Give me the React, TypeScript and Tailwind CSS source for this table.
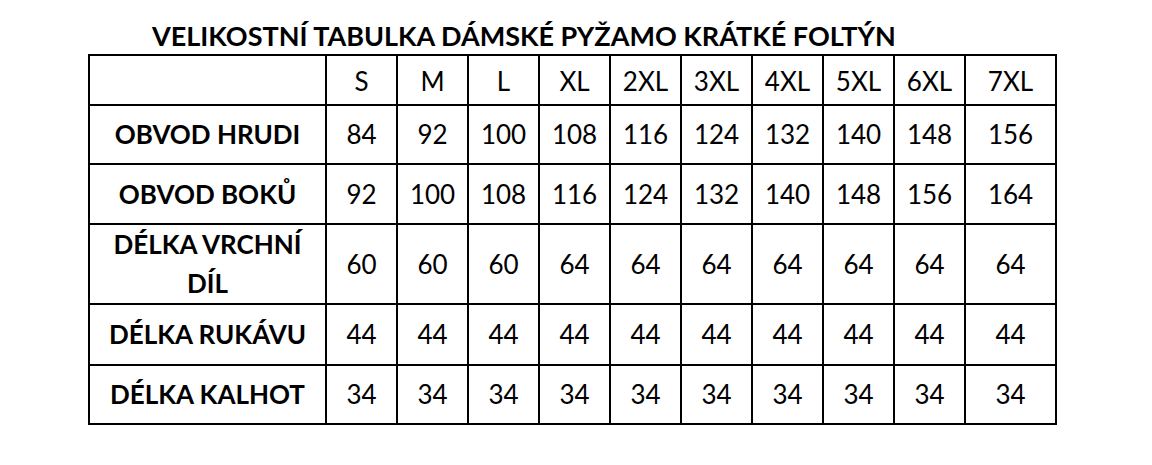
const sizes = ["S", "M", "L", "XL", "2XL", "3XL", "4XL", "5XL", "6XL", "7XL"];

const rows: { label: React.ReactNode; values: number[]; h: string }[] = [
  { label: "OBVOD HRUDI", values: [84, 92, 100, 108, 116, 124, 132, 140, 148, 156], h: "h-[59px]" },
  { label: "OBVOD BOKŮ", values: [92, 100, 108, 116, 124, 132, 140, 148, 156, 164], h: "h-[60px]" },
  {
    label: (
      <>
        DÉLKA VRCHNÍ
        <br />
        DÍL
      </>
    ),
    values: [60, 60, 60, 64, 64, 64, 64, 64, 64, 64],
    h: "h-[80px]",
  },
  { label: "DÉLKA RUKÁVU", values: [44, 44, 44, 44, 44, 44, 44, 44, 44, 44], h: "h-[61px]" },
  { label: "DÉLKA KALHOT", values: [34, 34, 34, 34, 34, 34, 34, 34, 34, 34], h: "h-[59px]" },
];

const cell = "border-2 border-black text-center align-middle p-0";

export default function App() {
  return (
    <div className="w-[1152px] h-[465px] bg-white text-black font-['Lato',sans-serif]">
      <h1 className="m-0 pl-[152px] pt-[20px] h-[54px] text-[27px] leading-[32px] font-bold whitespace-nowrap">
        VELIKOSTNÍ TABULKA DÁMSKÉ PYŽAMO KRÁTKÉ FOLTÝN
      </h1>
      <table className="ml-[88px] border-collapse table-fixed w-[967px]">
        <colgroup>
          <col className="w-[237px]" />
          {sizes.slice(0, 9).map(s => (
            <col key={s} className="w-[71px]" />
          ))}
          <col className="w-[91px]" />
        </colgroup>
        <thead>
          <tr className="h-[50px]">
            <th className={cell}></th>
            {sizes.map(s => (
              <th key={s} className={`${cell} text-[26px] font-normal pt-[3px]`}>
                {s}
              </th>
            ))}
          </tr>
        </thead>
        <tbody>
          {rows.map((r, i) => (
            <tr key={i} className={r.h}>
              <td className={`${cell} text-[26px] font-bold leading-[39px]`}>{r.label}</td>
              {r.values.map((v, j) => (
                <td key={j} className={`${cell} text-[26px]`}>
                  {v}
                </td>
              ))}
            </tr>
          ))}
        </tbody>
      </table>
    </div>
  );
}
